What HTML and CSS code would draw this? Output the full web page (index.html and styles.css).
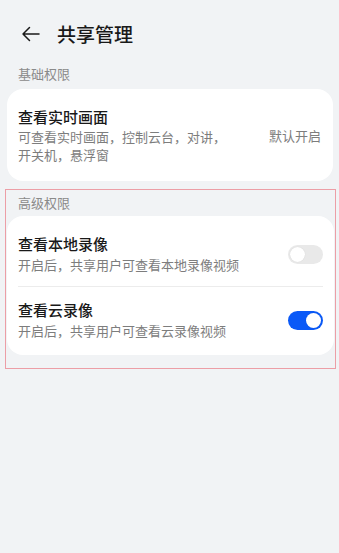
FILE: index.html
```html
<!DOCTYPE html>
<html lang="zh-CN">
<head>
    <meta charset="UTF-8">
    <meta name="viewport" content="width=device-width, initial-scale=1.0">
    <title>共享管理</title>
    <link rel="stylesheet" href="styles.css">
</head>
<body>
    <div class="header">
        <svg class="back" width="19" height="16" viewBox="0 0 19 16">
            <path d="M18 8H2M8.5 1.5L2 8l6.5 6.5" fill="none" stroke="#1a1a1a" stroke-width="1.5" stroke-linecap="round" stroke-linejoin="round"/>
        </svg>
        <h1>共享管理</h1>
    </div>

    <div class="label">基础权限</div>
    <div class="card">
        <div class="row basic">
            <div class="text">
                <div class="name">查看实时画面</div>
                <div class="desc">可查看实时画面，控制云台，对讲，开关机，悬浮窗</div>
            </div>
            <div class="status">默认开启</div>
        </div>
    </div>

    <div class="advanced">
        <div class="label">高级权限</div>
        <div class="card">
            <div class="row">
                <div class="text">
                    <div class="name">查看本地录像</div>
                    <div class="desc">开启后，共享用户可查看本地录像视频</div>
                </div>
                <div class="switch"><span class="knob"></span></div>
            </div>
            <div class="row">
                <div class="text">
                    <div class="name">查看云录像</div>
                    <div class="desc">开启后，共享用户可查看云录像视频</div>
                </div>
                <div class="switch on"><span class="knob"></span></div>
            </div>
        </div>
    </div>
</body>
</html>
```

FILE: styles.css
```css
body {
    margin: 0;
    padding: 0;
    background-color: #f1f3f5;
    font-family: "Noto Sans CJK SC", "Noto Sans", sans-serif;
    color: #191919;
}
.header {
    display: flex;
    align-items: center;
    height: 50px;
    padding: 9px 0 0 21px;
}
.back {
    display: block;
    margin-right: 17px;
}
h1 {
    margin: 0;
    font-size: 19px;
    font-weight: 500;
    line-height: 26px;
}
.label {
    padding-left: 18px;
    font-size: 13px;
    line-height: 30px;
    color: #8a8a8a;
}
.card {
    margin: 0 6px 0 7px;
    background-color: #fff;
    border-radius: 16px;
    padding: 5px 11px 3px 11px;
}
.row {
    display: flex;
    align-items: center;
    justify-content: space-between;
    padding: 12px 0 11px 0;
}
.row + .row {
    border-top: 1px solid #ececec;
}
.row.basic {
    padding: 12px 1px 14px 0;
}
.name {
    font-size: 15px;
    font-weight: 500;
    line-height: 22px;
}
.desc {
    font-size: 13px;
    line-height: 20px;
    color: #7d7d7d;
}
.basic .desc {
    width: 215px;
    line-height: 18px;
}
.status {
    font-size: 13px;
    color: #7d7d7d;
}
.advanced {
    margin: 8px 3px 0 5px;
    border: 1px solid #ec9ea6;
    padding: 0 0 13px 0;
}
.advanced .label {
    padding-left: 12px;
    line-height: 26px;
}
.advanced .card {
    margin: 0 1px;
}
.switch {
    position: relative;
    width: 35px;
    height: 19px;
    border-radius: 10px;
    background-color: #e9e9e9;
    flex-shrink: 0;
}
.switch .knob {
    position: absolute;
    top: 2px;
    left: 2px;
    width: 15px;
    height: 15px;
    border-radius: 50%;
    background-color: #fff;
    box-shadow: 0 0 1px rgba(0, 0, 0, 0.15);
}
.switch.on {
    background-color: #0a59f7;
}
.switch.on .knob {
    left: 18px;
}
```
